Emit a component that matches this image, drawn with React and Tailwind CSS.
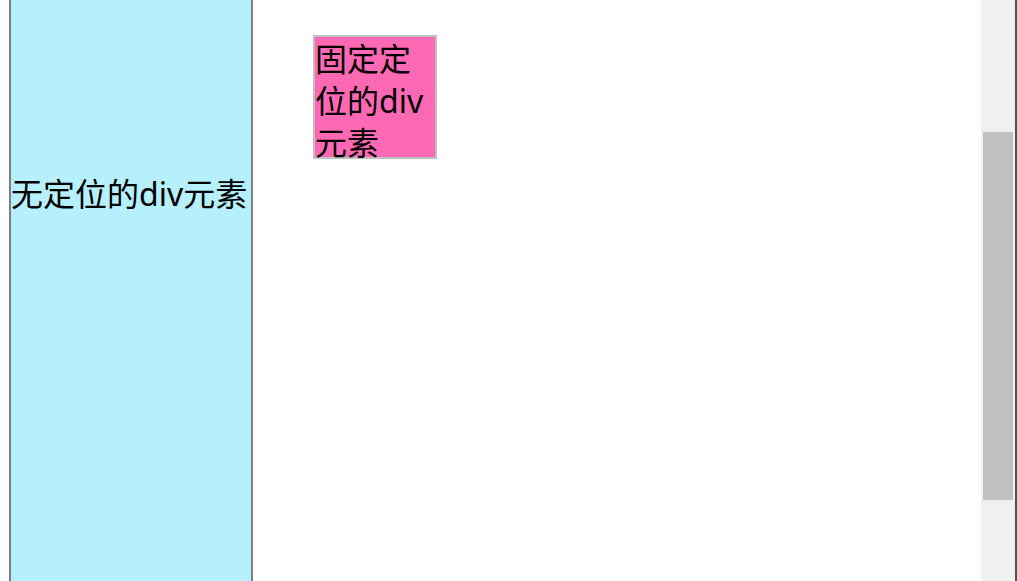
function StaticBox() {
  return (
    <div className="w-61 shrink-0 border-x-2 border-[#808080] bg-[#b6f0ff] pt-[173px]">
      <p className="whitespace-nowrap">无定位的div元素</p>
    </div>
  );
}

function FixedBox() {
  return (
    <div className="mt-[35px] ml-15 size-31 shrink-0 border-2 border-[#c0c0c0] bg-[#ff69b4] pt-px">
      <p>固定定位的div元素</p>
    </div>
  );
}

function ScrollTrack() {
  return (
    <div
      aria-hidden="true"
      className="flex w-9 shrink-0 flex-col border-r-2 border-[#575050] bg-[#f0f0f0] px-0.5"
    >
      <div className="grow-[132]" />
      <div className="grow-[368] bg-[#c1c1c1]" />
      <div className="grow-[81]" />
    </div>
  );
}

export default function App() {
  return (
    <div className="flex min-h-screen bg-white font-['Noto_Sans','Noto_Sans_CJK_SC',sans-serif] text-[32px] leading-[42px] text-black">
      <main lang="zh-CN" className="flex grow pl-[9px]">
        <StaticBox />
        <FixedBox />
      </main>
      <ScrollTrack />
    </div>
  );
}
